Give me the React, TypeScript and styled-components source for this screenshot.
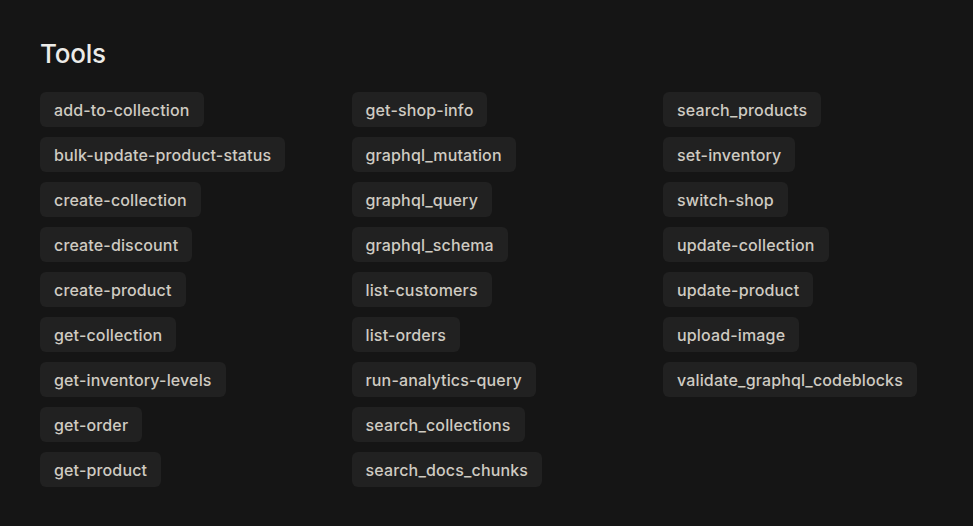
import { FC } from 'react'
import styled, { createGlobalStyle } from 'styled-components'

const GlobalStyle = createGlobalStyle`
  html, body {
    margin: 0;
    padding: 0;
    background: #151515;
  }
  body {
    font-family: Inter, 'Noto Sans', sans-serif;
    -webkit-font-smoothing: antialiased;
  }
`

const Page = styled.div`
  min-height: 526px;
  box-sizing: border-box;
  padding: 36px 40px 30px;
  background: #151515;
`

const Title = styled.h2`
  margin: 0 0 20px;
  font-size: 26px;
  font-weight: 500;
  line-height: 36px;
  color: #ecebe8;
  letter-spacing: -0.2px;
`

const Columns = styled.div`
  display: grid;
  grid-template-columns: repeat(3, 270px);
  column-gap: 41.5px;
  align-items: start;
`

const Column = styled.div`
  display: flex;
  flex-direction: column;
  align-items: flex-start;
  gap: 10px;
`

const Chip = styled.div`
  height: 35px;
  box-sizing: border-box;
  display: flex;
  align-items: center;
  padding: 0 14px;
  background: #212121;
  border-radius: 6px;
  color: #cfcbc2;
  font-size: 16px;
  font-weight: 500;
  letter-spacing: 0.15px;
  white-space: nowrap;
`

const columns: string[][] = [
  [
    'add-to-collection',
    'bulk-update-product-status',
    'create-collection',
    'create-discount',
    'create-product',
    'get-collection',
    'get-inventory-levels',
    'get-order',
    'get-product',
  ],
  [
    'get-shop-info',
    'graphql_mutation',
    'graphql_query',
    'graphql_schema',
    'list-customers',
    'list-orders',
    'run-analytics-query',
    'search_collections',
    'search_docs_chunks',
  ],
  [
    'search_products',
    'set-inventory',
    'switch-shop',
    'update-collection',
    'update-product',
    'upload-image',
    'validate_graphql_codeblocks',
  ],
]

const App: FC = () => {
  return (
    <>
      <GlobalStyle />
      <Page>
        <Title>Tools</Title>
        <Columns>
          {columns.map((list, i) => (
            <Column key={i}>
              {list.map((name) => (
                <Chip key={name}>{name}</Chip>
              ))}
            </Column>
          ))}
        </Columns>
      </Page>
    </>
  )
}

export default App
